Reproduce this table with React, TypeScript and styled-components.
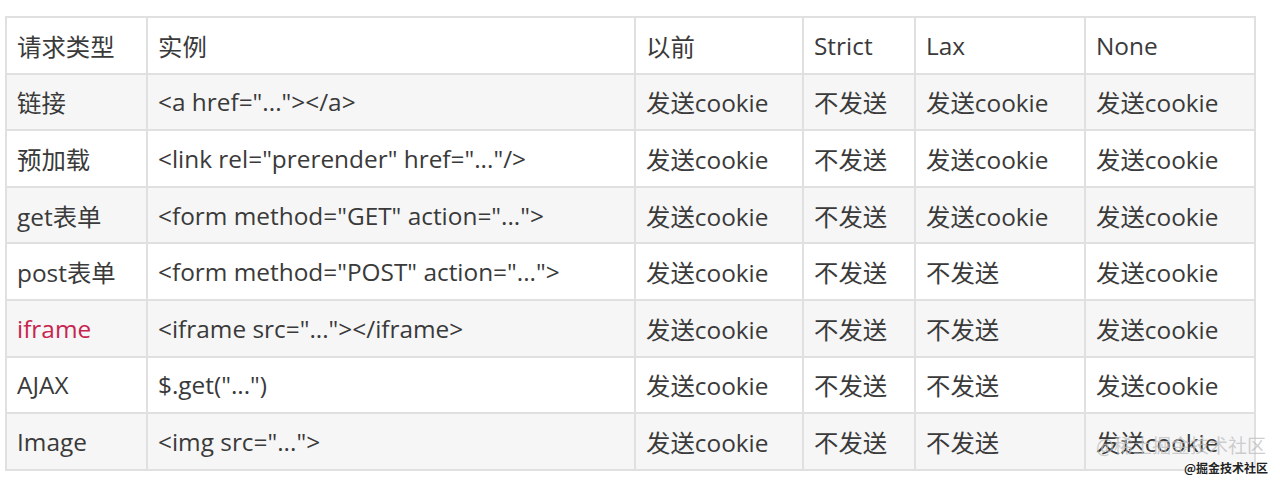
import styled, { createGlobalStyle } from 'styled-components';

const GlobalStyle = createGlobalStyle`
  html, body {
    margin: 0;
    padding: 0;
    background: #ffffff;
  }
  body {
    font-family: 'Open Sans', 'Noto Sans CJK SC', sans-serif;
    color: #333333;
  }
`;

type RowData = {
  type: string;
  example: string;
  before: string;
  strict: string;
  lax: string;
  none: string;
  highlight?: boolean;
};

const SEND = '发送cookie';
const NO = '不发送';

const rows: RowData[] = [
  { type: '链接', example: '<a href="..."></a>', before: SEND, strict: NO, lax: SEND, none: SEND },
  { type: '预加载', example: '<link rel="prerender" href="..."/>', before: SEND, strict: NO, lax: SEND, none: SEND },
  { type: 'get表单', example: '<form method="GET" action="...">', before: SEND, strict: NO, lax: SEND, none: SEND },
  { type: 'post表单', example: '<form method="POST" action="...">', before: SEND, strict: NO, lax: NO, none: SEND },
  { type: 'iframe', example: '<iframe src="..."></iframe>', before: SEND, strict: NO, lax: NO, none: SEND, highlight: true },
  { type: 'AJAX', example: '$.get("...")', before: SEND, strict: NO, lax: NO, none: SEND },
  { type: 'Image', example: '<img src="...">', before: SEND, strict: NO, lax: NO, none: SEND },
];

const headers = ['请求类型', '实例', '以前', 'Strict', 'Lax', 'None'];

const Page = styled.div`
  position: relative;
  width: 1280px;
  height: 483px;
  padding: 16px 0 0 5px;
  box-sizing: border-box;
  overflow: hidden;
`;

const Grid = styled.div`
  display: grid;
  grid-template-columns: 139px 486px 166px 110px 168px 168px;
  grid-auto-rows: 54.6px;
  gap: 2px;
  padding: 2px;
  background: #e0e0e0;
  width: max-content;
`;

const Cell = styled.div<{ $striped?: boolean; $red?: boolean }>`
  display: flex;
  align-items: center;
  padding: 0 10px;
  background: ${(p) => (p.$striped ? '#f6f6f7' : '#ffffff')};
  color: ${(p) => (p.$red ? '#c7254e' : '#3a3a3a')};
  font-size: 24.4px;
  white-space: nowrap;
  overflow: hidden;
`;

const Watermark = styled.div`
  position: absolute;
  right: 14px;
  bottom: 27px;
  font-family: 'Noto Sans CJK SC', sans-serif;
  font-size: 19px;
  line-height: 22px;
  color: rgba(190, 190, 190, 0.75);
`;

const Stamp = styled.div`
  position: absolute;
  right: 12px;
  bottom: 8px;
  font-family: 'Noto Sans CJK SC', sans-serif;
  font-weight: 700;
  font-size: 12px;
  line-height: 14px;
  color: #222222;
  text-shadow: 0 0 2px #ffffff, 0 0 2px #ffffff;
`;

export default function App() {
  return (
    <Page>
      <GlobalStyle />
      <Grid>
        {headers.map((h) => (
          <Cell key={h}>{h}</Cell>
        ))}
        {rows.map((r, i) => {
          const striped = i % 2 === 0;
          return [
            <Cell key={`${i}-t`} $striped={striped} $red={r.highlight}>
              {r.type}
            </Cell>,
            <Cell key={`${i}-e`} $striped={striped}>
              {r.example}
            </Cell>,
            <Cell key={`${i}-b`} $striped={striped}>
              {r.before}
            </Cell>,
            <Cell key={`${i}-s`} $striped={striped}>
              {r.strict}
            </Cell>,
            <Cell key={`${i}-l`} $striped={striped}>
              {r.lax}
            </Cell>,
            <Cell key={`${i}-n`} $striped={striped}>
              {r.none}
            </Cell>,
          ];
        })}
      </Grid>
      <Watermark>@稀土掘金技术社区</Watermark>
      <Stamp>@掘金技术社区</Stamp>
    </Page>
  );
}
